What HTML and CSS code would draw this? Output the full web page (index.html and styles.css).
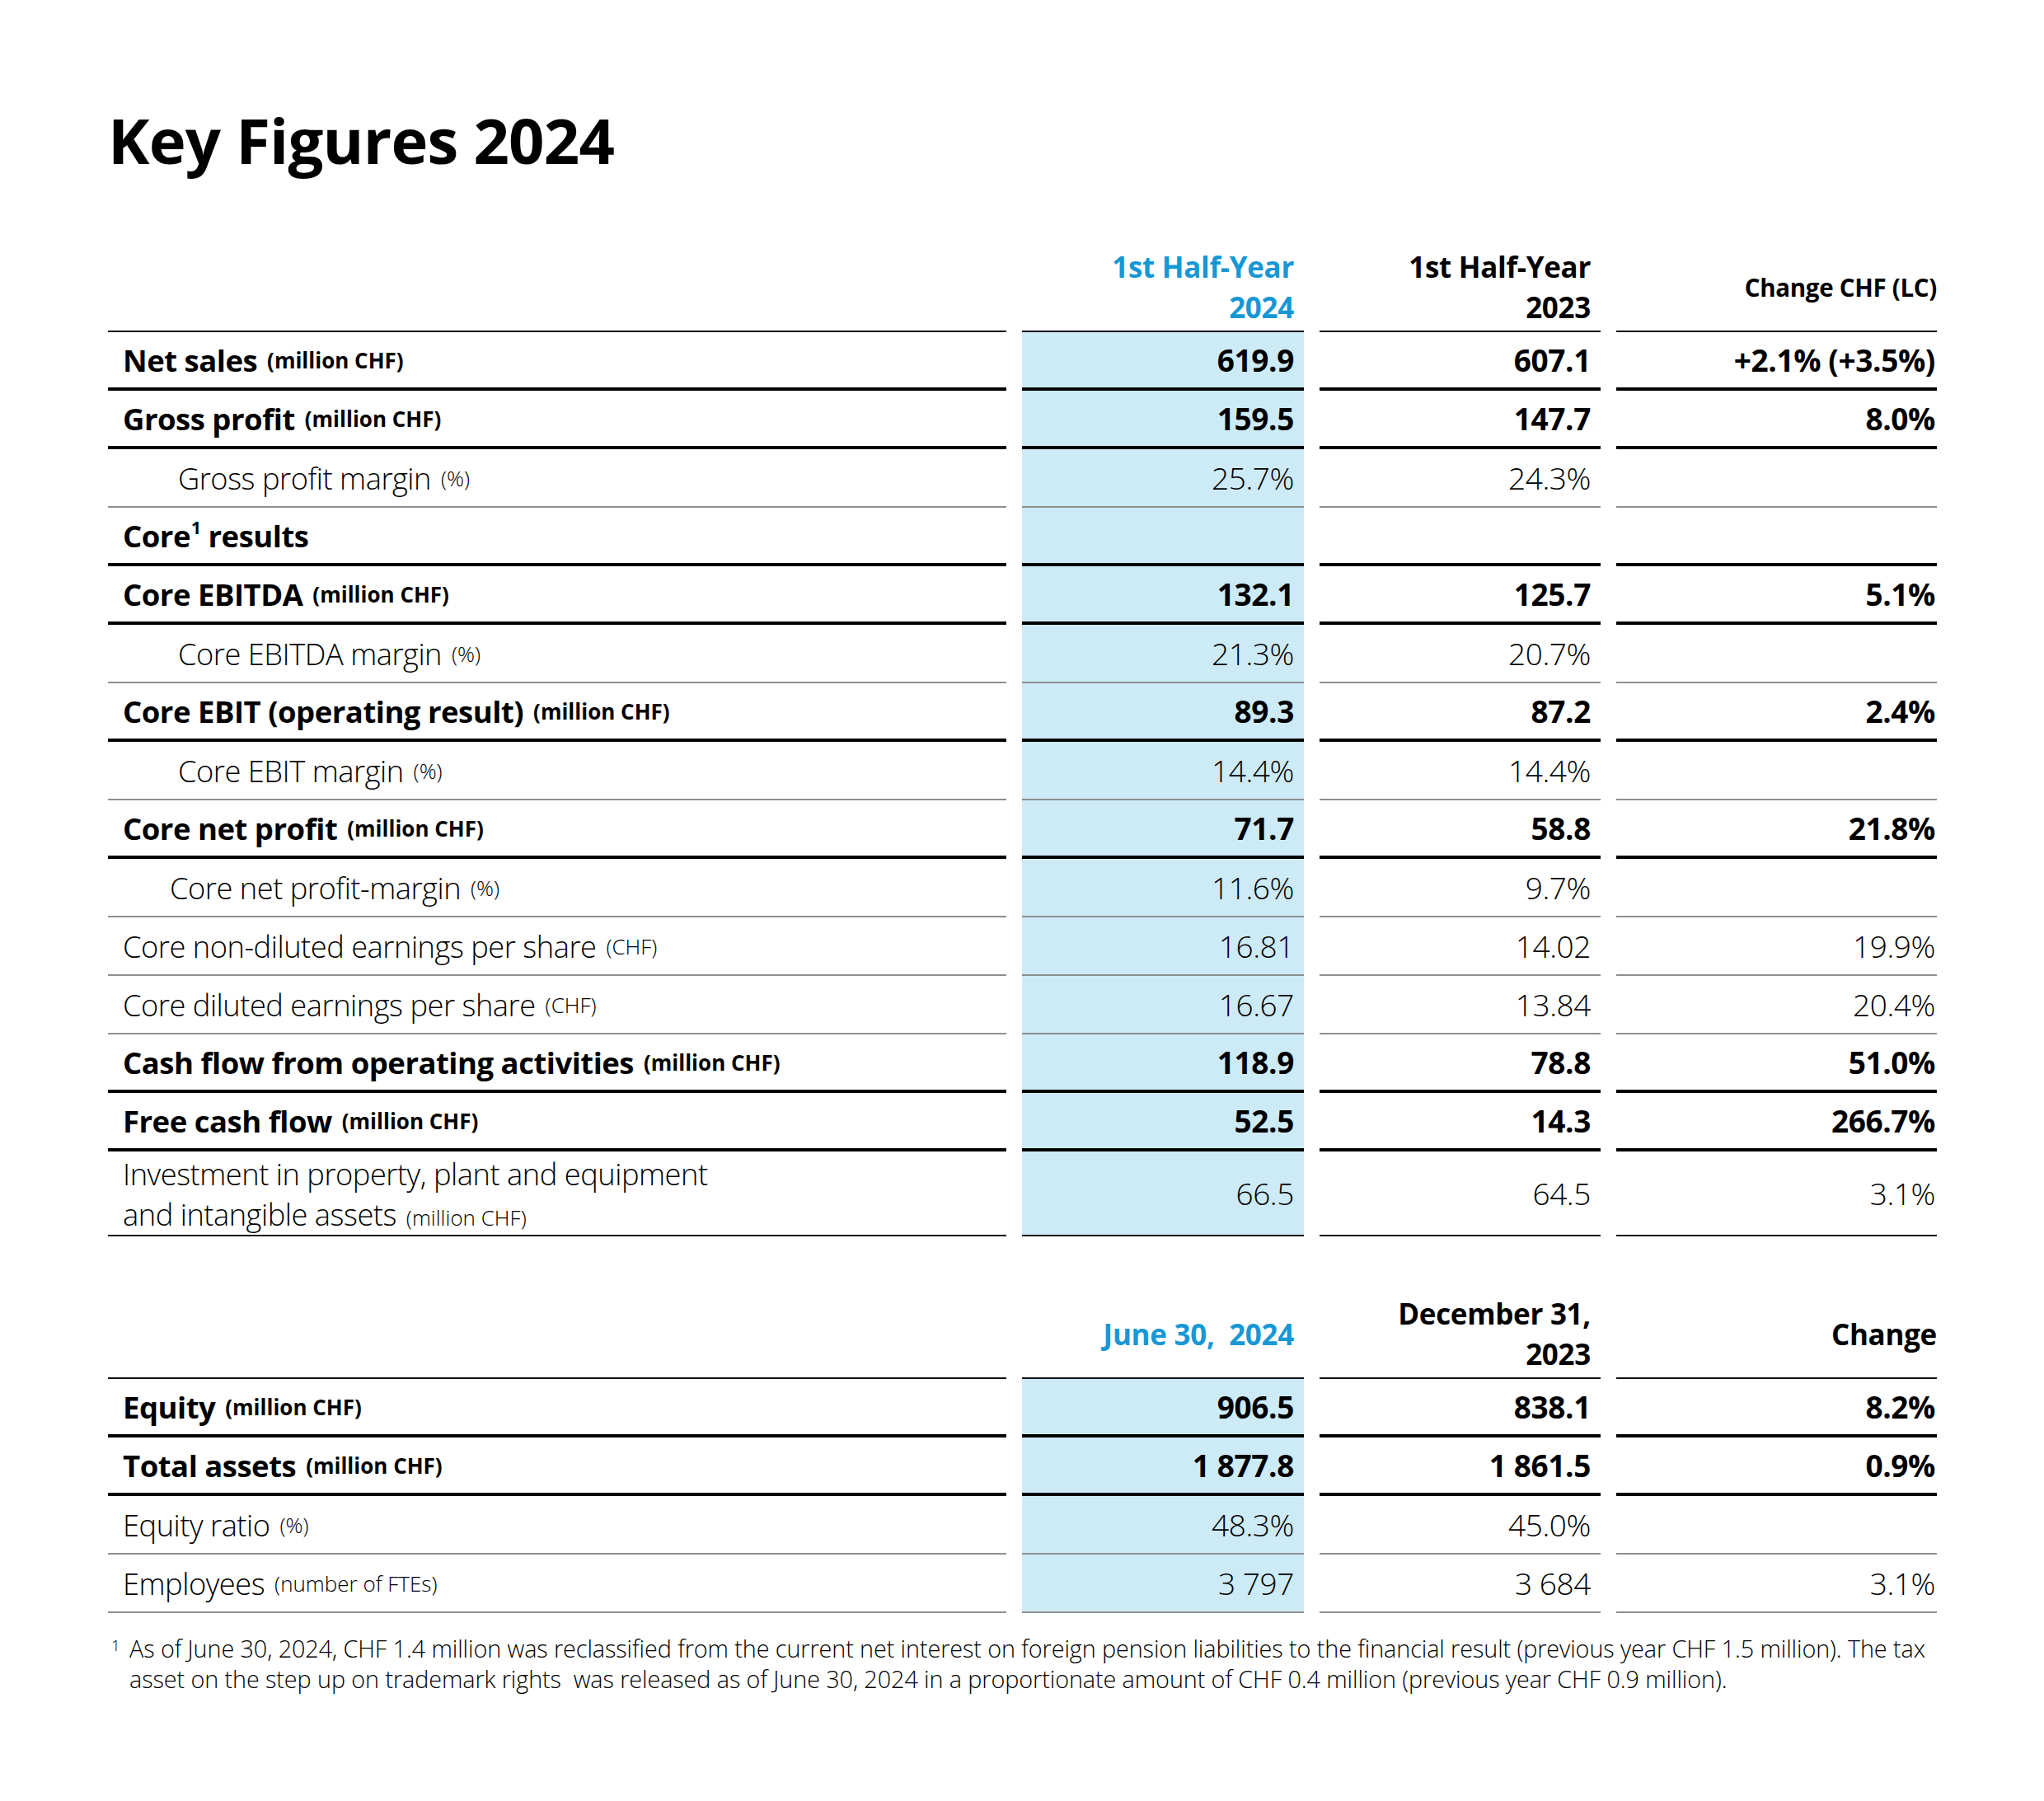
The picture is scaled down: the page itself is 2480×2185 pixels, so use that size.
FILE: index.html
```html
<!DOCTYPE html>
<html lang="en">
<head>
<meta charset="utf-8">
<title>Key Figures 2024</title>
<link rel="stylesheet" href="styles.css">
</head>
<body>
<main class="page">
  <h1 class="title">Key Figures 2024</h1>

  <section class="grid t1">
    <div class="h lab"></div>
    <div class="h hd blue">1st Half-Year<br>2024</div>
    <div class="h hd">1st Half-Year<br>2023</div>
    <div class="h hd small">Change CHF (LC)</div>

    <div class="c lab b thick">Net sales <span class="u">(million CHF)</span></div>
    <div class="c num b thick hi">619.9</div>
    <div class="c num b thick">607.1</div>
    <div class="c num b thick last">+2.1% (+3.5%)</div>

    <div class="c lab b thick">Gross profit <span class="u">(million CHF)</span></div>
    <div class="c num b thick hi">159.5</div>
    <div class="c num b thick">147.7</div>
    <div class="c num b thick last">8.0%</div>

    <div class="c lab l grey ind">Gross profit margin <span class="u">(%)</span></div>
    <div class="c num l grey hi">25.7%</div>
    <div class="c num l grey">24.3%</div>
    <div class="c num l grey last"></div>

    <div class="c lab b thick"><span>Core<sup>1</sup> results</span></div>
    <div class="c num b thick hi"></div>
    <div class="c num b thick"></div>
    <div class="c num b thick last"></div>

    <div class="c lab b thick">Core EBITDA <span class="u">(million CHF)</span></div>
    <div class="c num b thick hi">132.1</div>
    <div class="c num b thick">125.7</div>
    <div class="c num b thick last">5.1%</div>

    <div class="c lab l grey ind">Core EBITDA margin <span class="u">(%)</span></div>
    <div class="c num l grey hi">21.3%</div>
    <div class="c num l grey">20.7%</div>
    <div class="c num l grey last"></div>

    <div class="c lab b thick">Core EBIT (operating result) <span class="u">(million CHF)</span></div>
    <div class="c num b thick hi">89.3</div>
    <div class="c num b thick">87.2</div>
    <div class="c num b thick last">2.4%</div>

    <div class="c lab l grey ind">Core EBIT margin <span class="u">(%)</span></div>
    <div class="c num l grey hi">14.4%</div>
    <div class="c num l grey">14.4%</div>
    <div class="c num l grey last"></div>

    <div class="c lab b thick">Core net profit <span class="u">(million CHF)</span></div>
    <div class="c num b thick hi">71.7</div>
    <div class="c num b thick">58.8</div>
    <div class="c num b thick last">21.8%</div>

    <div class="c lab l grey ind2">Core net profit-margin <span class="u">(%)</span></div>
    <div class="c num l grey hi">11.6%</div>
    <div class="c num l grey">9.7%</div>
    <div class="c num l grey last"></div>

    <div class="c lab l grey">Core non-diluted earnings per share <span class="u">(CHF)</span></div>
    <div class="c num l grey hi">16.81</div>
    <div class="c num l grey">14.02</div>
    <div class="c num l grey last">19.9%</div>

    <div class="c lab l grey">Core diluted earnings per share <span class="u">(CHF)</span></div>
    <div class="c num l grey hi">16.67</div>
    <div class="c num l grey">13.84</div>
    <div class="c num l grey last">20.4%</div>

    <div class="c lab b thick">Cash flow from operating activities <span class="u">(million CHF)</span></div>
    <div class="c num b thick hi">118.9</div>
    <div class="c num b thick">78.8</div>
    <div class="c num b thick last">51.0%</div>

    <div class="c lab b thick">Free cash flow <span class="u">(million CHF)</span></div>
    <div class="c num b thick hi">52.5</div>
    <div class="c num b thick">14.3</div>
    <div class="c num b thick last">266.7%</div>

    <div class="c lab l thin tall">Investment in property, plant and equipment<br>and intangible assets <span class="u">(million CHF)</span></div>
    <div class="c num l thin tall hi">66.5</div>
    <div class="c num l thin tall">64.5</div>
    <div class="c num l thin tall last">3.1%</div>
  </section>

  <section class="grid t2">
    <div class="h lab"></div>
    <div class="h hd blue">June 30,&nbsp; 2024</div>
    <div class="h hd">December 31,<br>2023</div>
    <div class="h hd last">Change</div>

    <div class="c lab b thick">Equity <span class="u">(million CHF)</span></div>
    <div class="c num b thick hi">906.5</div>
    <div class="c num b thick">838.1</div>
    <div class="c num b thick last">8.2%</div>

    <div class="c lab b thick">Total assets <span class="u">(million CHF)</span></div>
    <div class="c num b thick hi">1 877.8</div>
    <div class="c num b thick">1 861.5</div>
    <div class="c num b thick last">0.9%</div>

    <div class="c lab l grey">Equity ratio <span class="u">(%)</span></div>
    <div class="c num l grey hi">48.3%</div>
    <div class="c num l grey">45.0%</div>
    <div class="c num l grey last"></div>

    <div class="c lab l grey">Employees <span class="u">(number of FTEs)</span></div>
    <div class="c num l grey hi">3 797</div>
    <div class="c num l grey">3 684</div>
    <div class="c num l grey last">3.1%</div>
  </section>

  <footer class="note">
    <span class="mark">1</span>
    <p class="note-text">As of June 30, 2024, CHF 1.4 million was reclassified from the current net interest on foreign pension liabilities to the financial result (previous year CHF 1.5 million). The tax<br>asset on the step up on trademark rights&nbsp; was released as of June 30, 2024 in a proportionate amount of CHF 0.4 million (previous year CHF 0.9 million).</p>
  </footer>
</main>
</body>
</html>
```

FILE: styles.css
```css
* { box-sizing: border-box; }

html, body {
  margin: 0;
  padding: 0;
  background: #fff;
}

body {
  font-family: "Open Sans", "Noto Sans", "Liberation Sans", sans-serif;
  color: #000;
}

.page {
  width: 2480px;
  padding: 120px 130px 0 131px;
}

.title {
  margin: 0;
  font-size: 76px;
  font-weight: 700;
  line-height: 100px;
  letter-spacing: -0.8px;
}

.grid {
  display: grid;
  grid-template-columns: 1090px 342px 341px 389px;
  column-gap: 19px;
}

.t1 { margin-top: 81px; }
.t2 { margin-top: 71px; }

.h {
  height: 102px;
  border-bottom: 2px solid #111;
  display: flex;
  align-items: center;
  justify-content: flex-end;
  text-align: right;
  padding-right: 12px;
  padding-bottom: 6px;
}

.h.lab { padding: 0; }

.hd {
  font-size: 35px;
  font-weight: 700;
  line-height: 49px;
  letter-spacing: -0.3px;
}

.hd.small {
  font-size: 29.5px;
  padding-right: 0;
}

.hd.last { padding-right: 0; }

.blue { color: #1897d5; }

.c {
  height: 71px;
  display: flex;
  align-items: center;
  font-size: 37px;
  letter-spacing: -0.4px;
}

.c.tall {
  height: 103px;
  line-height: 49px;
}

.lab {
  padding-left: 18px;
  justify-content: flex-start;
  white-space: pre;
}

.lab.b { font-size: 36.5px; letter-spacing: -0.5px; }
.lab.l { font-size: 36.3px; letter-spacing: -0.5px; }

.lab.ind { padding-left: 85px; }
.lab.ind2 { padding-left: 75px; }

.num {
  justify-content: flex-end;
  padding-right: 12px;
}

.num.last { padding-right: 2px; }

.hi { background: #cdeaf7; }

.b { font-weight: 700; }
.l { font-weight: 300; }

.u {
  font-size: 26px;
  margin-left: 3px;
  letter-spacing: 0;
}

.lab.tall { display: block; padding-top: 3px; white-space: normal; }

sup {
  font-size: 21px;
  line-height: 0;
  vertical-align: super;
  position: relative;
  top: -2px;
  margin-left: 1px;
}

.thick { border-bottom: 4px solid #000; }
.thin { border-bottom: 2px solid #111; }
.grey { border-bottom: 2px solid #8e8e8e; }

.note {
  display: flex;
  margin-top: 24px;
  font-weight: 300;
  font-size: 28.8px;
  line-height: 37px;
}

.mark {
  width: 26px;
  padding-left: 4px;
  font-size: 19px;
  line-height: 30px;
}

.note-text {
  margin: 0;
  letter-spacing: -0.1px;
}
```
